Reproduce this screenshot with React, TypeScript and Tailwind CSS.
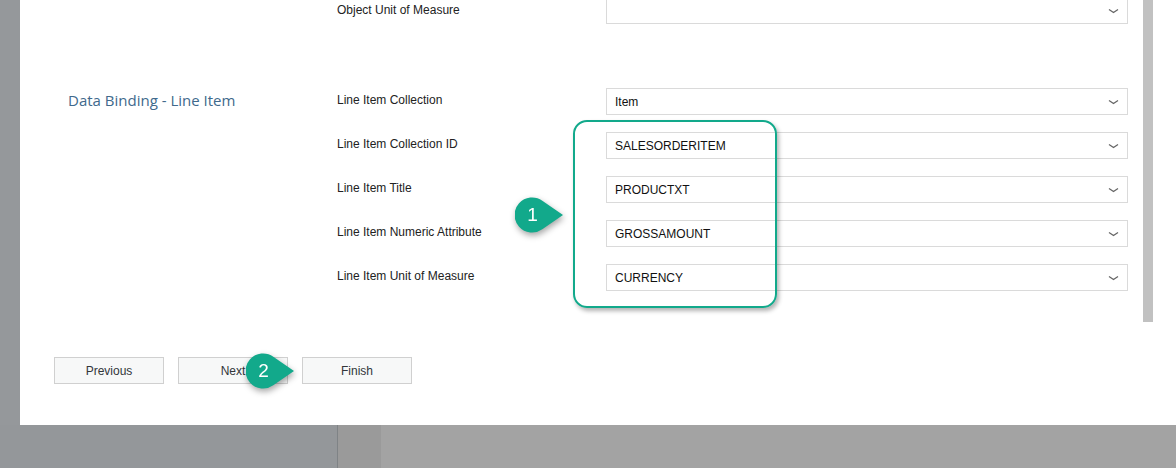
import React from "react";

const GREEN = "#12a98b";

type Row = { label: string; value: string };

const lineItemRows: Row[] = [
  { label: "Line Item Collection", value: "Item" },
  { label: "Line Item Collection ID", value: "SALESORDERITEM" },
  { label: "Line Item Title", value: "PRODUCTXT" },
  { label: "Line Item Numeric Attribute", value: "GROSSAMOUNT" },
  { label: "Line Item Unit of Measure", value: "CURRENCY" },
];

function Chevron() {
  return (
    <svg width="11" height="6" viewBox="0 0 11 6" className="shrink-0">
      <path d="M1 1.5 L5.5 4.5 L10 1.5" fill="none" stroke="#666" strokeWidth="1.3" />
    </svg>
  );
}

function Select({ value }: { value: string }) {
  return (
    <div className="flex h-[27px] w-[522px] items-center justify-between border border-[#dadada] bg-white pl-[8px] pr-[8px] pt-[1px]">
      <span className="text-[12px] text-[#111]">{value}</span>
      <Chevron />
    </div>
  );
}

function Badge({ n, className }: { n: string; className: string }) {
  return (
    <div className={`absolute h-[36px] w-[50px] drop-shadow-[1px_3px_3px_rgba(0,0,0,0.35)] ${className}`}>
      <svg width="50" height="36" viewBox="0 0 50 36">
        <path d="M48 18 L27.3 3.8 A17.5 17.5 0 1 0 27.3 32.2 Z" fill={GREEN} />
      </svg>
      <span className="absolute left-0 top-0 flex h-[36px] w-[35px] items-center justify-center text-[19px] text-white">
        {n}
      </span>
    </div>
  );
}

function Button({ label }: { label: string }) {
  return (
    <button className="flex h-[27px] w-[110px] items-center justify-center border border-[#d0d0d0] bg-[#f7f8f8] text-[12px] text-[#32363a]">
      {label}
    </button>
  );
}

export default function App() {
  return (
    <div
      className="flex h-[468px] w-[1176px] flex-col overflow-hidden bg-[#a3a3a3]"
      style={{ fontFamily: '"Liberation Sans", Arial, sans-serif' }}
    >
      <div className="flex h-[425px]">
        <div className="w-[20px] bg-[#95989b]" />
        <div className="relative flex-1 bg-white">
          {/* top row, partially scrolled off */}
          <div className="-mt-[3px] flex items-center pl-[317px]">
            <div className="w-[269px] pb-[2px] text-[12px] text-[#222]">Object Unit of Measure</div>
            <Select value="" />
          </div>

          <div className="mt-[64px] flex">
            <div className="w-[317px] pl-[48px] pt-[1px] text-[15px] text-[#40698c]" style={{ fontFamily: '"Open Sans", sans-serif' }}>
              Data Binding - Line Item
            </div>
            <div className="flex flex-col gap-[17px]">
              {lineItemRows.map((r) => (
                <div key={r.label} className="flex items-center">
                  <div className="w-[269px] pb-[3px] text-[12px] text-[#222]">{r.label}</div>
                  <Select value={r.value} />
                </div>
              ))}
            </div>
          </div>

          <div className="mt-[66px] flex gap-[14px] pl-[34px]">
            <Button label="Previous" />
            <Button label="Next" />
            <Button label="Finish" />
          </div>

          {/* scrollbar */}
          <div className="absolute left-[1123px] top-0 h-[322px] w-[10px] bg-[#c1c1c1]" />

          {/* callout */}
          <div
            className="absolute left-[553px] top-[120px] h-[188px] w-[204px] rounded-[14px] border-[2.5px] shadow-[2px_3px_4px_rgba(0,0,0,0.3)]"
            style={{ borderColor: GREEN }}
          />
          <Badge n="1" className="left-[495px] top-[197px]" />
          <Badge n="2" className="left-[226px] top-[353px]" />
        </div>
      </div>
      <div className="flex h-[43px]">
        <div className="w-[337px] bg-[#94979a]" />
        <div className="w-[1px] bg-[#7f8386]" />
        <div className="w-[43px] bg-[#9a9a9a]" />
        <div className="flex-1 bg-[#a3a3a3]" />
      </div>
    </div>
  );
}
